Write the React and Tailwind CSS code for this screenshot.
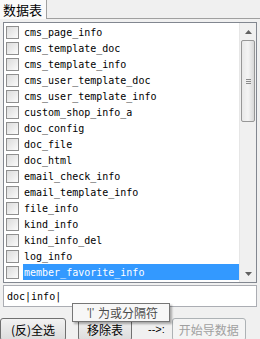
import React from "react";

const items = [
  "cms_page_info",
  "cms_template_doc",
  "cms_template_info",
  "cms_user_template_doc",
  "cms_user_template_info",
  "custom_shop_info_a",
  "doc_config",
  "doc_file",
  "doc_html",
  "email_check_info",
  "email_template_info",
  "file_info",
  "kind_info",
  "kind_info_del",
  "log_info",
  "member_favorite_info",
];

const mono = { fontFamily: '"DejaVu Sans Mono", "Liberation Mono", monospace' };
const cjk = { fontFamily: '"Noto Sans CJK SC", "Liberation Sans", sans-serif' };

function Box() {
  return (
    <div className="w-[13px] h-[13px] shrink-0 border border-[#8f8f8f] bg-gradient-to-br from-[#dcdcdc] to-[#fbfbfb]" />
  );
}

export default function App() {
  return (
    <div className="w-[260px] h-[339px] bg-[#f0f0f0] flex flex-col overflow-hidden relative">
      <div className="h-[19px] flex items-end border-b border-[#a0a0a0]">
        <div
          className="h-[19px] w-[47px] bg-[#fafafa] border-r border-[#a0a0a0] flex items-center pl-[3px] text-[13px] leading-none text-black -mb-px"
          style={cjk}
        >
          数据表
        </div>
      </div>
      <div className="flex-1 flex flex-col px-[3px] pt-[3px]">
        <div className="h-[261px] border border-[#828790] bg-white flex">
          <div className="flex-1 flex flex-col pt-px">
            {items.map((t, i) => {
              const sel = i === items.length - 1;
              return (
                <div key={t} className="h-[16px] flex items-center pl-[2px] gap-[4px]">
                  <Box />
                  <div
                    className={
                      "h-[16px] flex-1 flex items-center pl-[1px] text-[10px] " +
                      (sel ? "bg-[#3399ff] text-white" : "text-black")
                    }
                    style={mono}
                  >
                    {t}
                  </div>
                </div>
              );
            })}
          </div>
          <div className="w-[17px] bg-[#f0f0f0] flex flex-col border-l border-[#e6e6e6]">
            <div className="h-[17px] flex items-center justify-center text-[#606060]">
              <svg width="7" height="4" viewBox="0 0 7 4"><path d="M0 4 L3.5 0 L7 4 Z" fill="#606060" /></svg>
            </div>
            <div className="h-[82px] mx-[1px] border border-[#979797] rounded-[2px] bg-gradient-to-r from-[#e8e8e8] via-[#f4f4f4] to-[#d8d8d8] flex items-center justify-center">
              <div className="flex flex-col gap-[1px]">
                <div className="w-[5px] h-px bg-[#8a8a8a]" />
                <div className="w-[5px] h-px bg-[#8a8a8a]" />
                <div className="w-[5px] h-px bg-[#8a8a8a]" />
              </div>
            </div>
            <div className="flex-1" />
            <div className="h-[17px] flex items-center justify-center">
              <svg width="7" height="4" viewBox="0 0 7 4"><path d="M0 0 L3.5 4 L7 0 Z" fill="#606060" /></svg>
            </div>
          </div>
        </div>
        <div className="mt-[2px] h-[22px] border border-[#abadb3] bg-white flex items-center pl-[3px] text-[10px] text-black" style={mono}>
          doc|info|
        </div>
        <div className="mt-[11px] flex items-center">
          <div className="w-[66px] h-[23px] -ml-[3px] border border-[#707070] rounded-[3px] bg-gradient-to-b from-[#f2f2f2] to-[#dcdcdc] flex items-center justify-center text-[12px] text-black" style={cjk}>
            (反)全选
          </div>
          <div className="ml-[12px] w-[54px] h-[23px] border border-[#707070] rounded-[3px] bg-gradient-to-b from-[#f2f2f2] to-[#dcdcdc] flex items-center justify-center text-[12px] text-black" style={cjk}>
            移除表
          </div>
          <div className="ml-[16px] text-[11px] text-black" style={{ fontFamily: '"Liberation Sans", sans-serif' }}>
            --&gt;:
          </div>
          <div className="ml-[7px] w-[74px] h-[23px] border border-[#adb2b5] rounded-[3px] bg-[#f4f4f4] flex items-center justify-center text-[12px] text-[#a0a0a0]" style={cjk}>
            开始导数据
          </div>
        </div>
      </div>
      <div
        className="absolute left-[72px] top-[303px] w-[98px] h-[19px] bg-[#f7f7f7] border border-[#767676] shadow-[2px_2px_2px_rgba(0,0,0,0.3)] flex items-center pl-[14px] gap-[4px] text-[12px] text-[#4c4c4c]"
        style={cjk}
      >
        <span style={{ fontFamily: '"Liberation Sans", sans-serif', fontSize: 11 }}>'|'</span>
        <span>为或分隔符</span>
      </div>
    </div>
  );
}
